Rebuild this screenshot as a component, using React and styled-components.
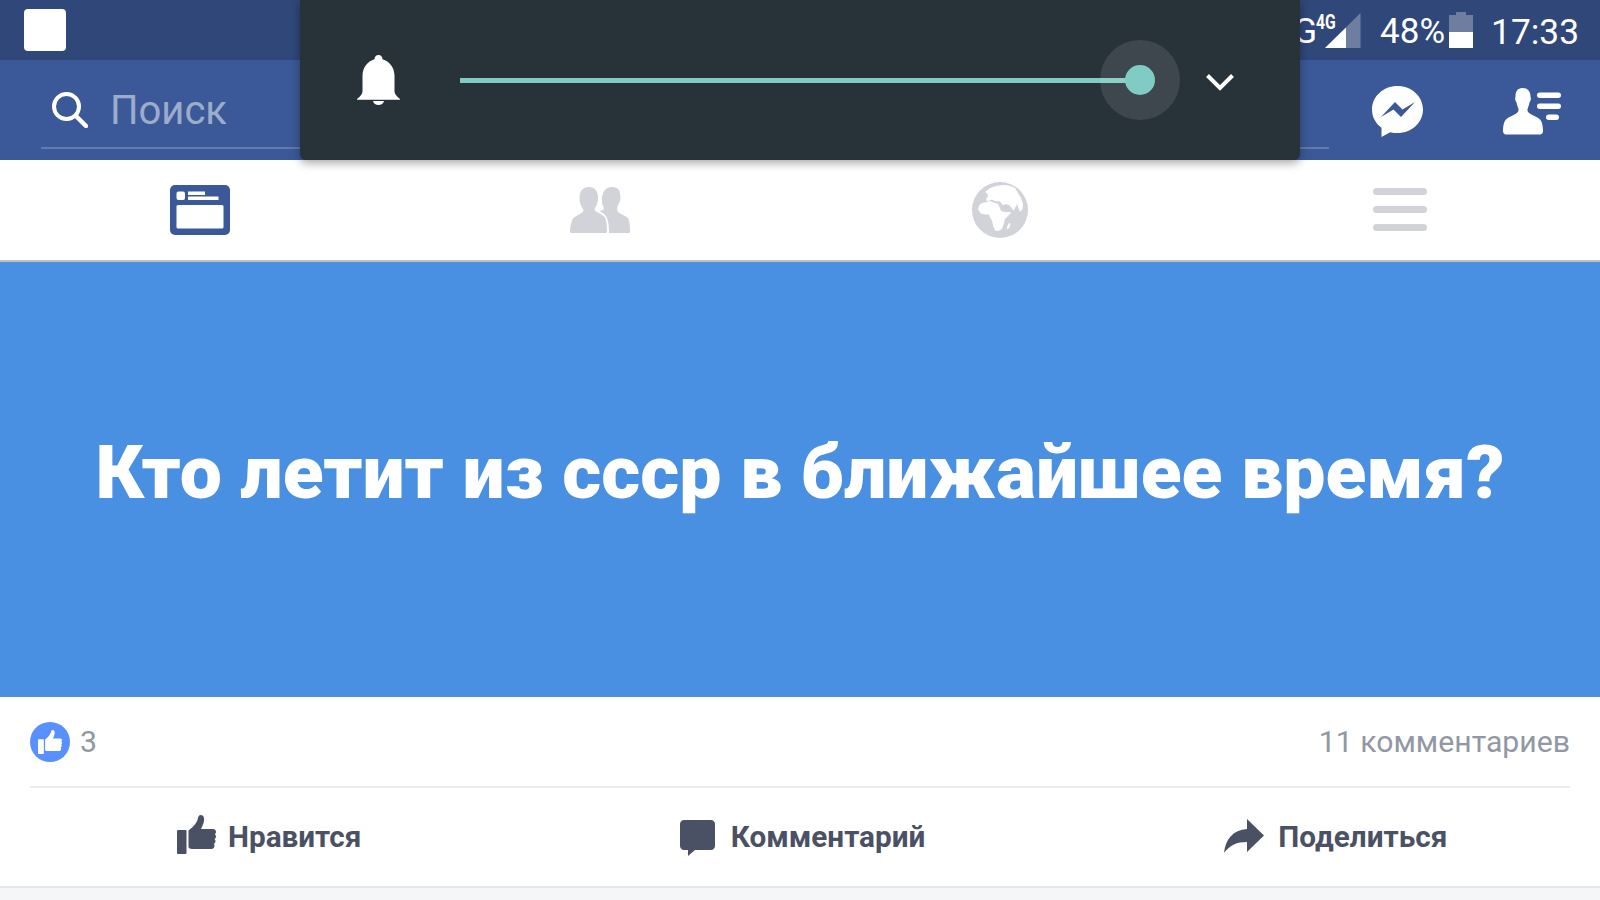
import React from 'react'
import styled, { createGlobalStyle } from 'styled-components'

const GlobalStyle = createGlobalStyle`
  html, body {
    margin: 0;
    padding: 0;
    background: #f5f6f8;
    font-family: Roboto, "Liberation Sans", sans-serif;
  }
`

const SearchIcon = () => (
  <svg width="36" height="36" viewBox="0 0 36 36" fill="none" stroke="#fff" strokeLinecap="round">
    <circle cx="14.500" cy="14.500" r="12.500" strokeWidth="4" />
    <path d="M24 24l10 10" strokeWidth="4.500" />
  </svg>
)

const BellIcon = () => (
  <svg width="43" height="50" viewBox="0 0 43 50" fill="#fff">
    <path d="M21.500 0c2.400 0 4 1.700 4 4.300C32.500 6.500 37.500 12.500 37.500 21v15.500c0 2.500 2.500 5 5.500 7.500v.8H0V44c3-2.500 5.500-5 5.500-7.500V21C5.500 12.500 10.500 6.500 17.500 4.300 17.500 1.700 19.100 0 21.500 0z" />
    <path d="M16 46h11c-.6 2.500-2.800 4-5.500 4S16.600 48.500 16 46z" />
  </svg>
)

const ChevronIcon = () => (
  <svg width="28" height="18" viewBox="0 0 28 18" fill="none" stroke="#fff" strokeWidth="4">
    <path d="M1.500 2.500L14 15 26.500 2.500" />
  </svg>
)

const MessengerIcon = () => (
  <svg width="51" height="51" viewBox="0 0 51 51">
    <path fill="#fff" d="M25.500 0C11.400 0 0 10.500 0 23.500c0 7.400 3.700 14 9.500 18.300V51l8.700-4.800c2.300.6 4.700.9 7.300.9 14.100 0 25.500-10.500 25.500-23.600C51 10.500 39.600 0 25.500 0z" />
    <path fill="#3b5998" d="M9 31l14-15 7.500 7.500L43 16 29 31l-7.500-7.500z" />
  </svg>
)

const FriendRequestIcon = () => (
  <svg width="58" height="47" viewBox="0 0 58 47" fill="#fff">
    <path d="M19.500 0c5 0 8 3.500 8 8.500 0 1 .5 1.500.3 3-.3 1.500-.8 2-1.300 3-.5 3-1.500 5-2 6.500-.3 2 .5 3.500 3 5 3 1.500 7 3 9.500 5.500 1.500 1.500 3 5 3 11.500 0 2-1.200 3.500-3 3.500H3c-1.800 0-3-1.500-3-3.500 0-6.500 1.500-10 3-11.500 2.500-2.500 6.500-4 9.500-5.500 2.500-1.500 3.300-3 3-5-.5-1.500-1.500-3.500-2-6.500-.5-1-1-1.500-1.300-3-.2-1.500.3-2 .3-3 0-5 2-8.500 7-8.500z" />
    <rect x="34" y="4.500" width="24" height="5.500" rx="2.750" />
    <rect x="34" y="15.500" width="24" height="5.500" rx="2.750" />
    <rect x="43" y="26.500" width="13" height="5.500" rx="2.750" />
  </svg>
)

const NewsIcon = () => (
  <svg width="60" height="50" viewBox="0 0 60 50">
    <rect width="60" height="50" rx="5" fill="#3b5998" />
    <rect x="6.500" y="6.500" width="8.500" height="8.500" rx="2" fill="#fff" />
    <rect x="18" y="6.500" width="17" height="3.500" fill="#fff" />
    <rect x="18" y="11.500" width="30.500" height="3.500" fill="#fff" />
    <rect x="6.500" y="20" width="47" height="23.500" rx="1.500" fill="#fff" />
  </svg>
)

const FriendsIcon = () => (
  <svg width="60" height="46" viewBox="0 0 60 46" fill="#d1d3d9">
    <path d="M19 0c6 0 9 4.500 9 10.500 0 4-1 7.500-3 10.500-.6 1-.6 2.200.4 3 2.200 2 8.600 3.500 10 7.500 1 2.600 1.600 7.500 1.600 13 0 .8-.6 1.500-1.500 1.500H1.500C.6 46 0 45.300 0 44.500c0-4.500 1-8.500 2.500-12 1.500-3.500 8-5 10.200-7.500 1-.8 1-2.200.3-3-2.500-3-3.500-7-3.500-11.500C9.500 4.500 13 0 19 0z" />
    <path d="M42 0c4.500 0 8 2.500 8 6.500 0 1.500.5 2.500.5 4 0 3-1.500 6-2.800 8.500-1 2.500-.7 5 1 6.500 2.500 2 8.500 3.500 10 7 1 3 1.300 7 1.300 12 0 1-.6 1.500-1.500 1.500H39c0-6-.5-11.500-2-15-1.500-3.500-4.500-5-7-6.500 1-1 2-1.700 3.500-1.500.5-1.500.5-3-.5-4.500-1.200-2-1.500-4-.8-5.500-.8-1.500-.5-3 .3-4.500C33.500 3 37 0 42 0z" />
  </svg>
)

const GlobeIcon = () => (
  <svg width="56" height="56" viewBox="0 0 56 56">
    <circle cx="28" cy="28" r="28" fill="#d1d3d9" />
    <path fill="#fff" d="M13 10l5-4 6-2 7-1 6 .5 6 2.500 3 5 3 5 2 6-.5 5-2.500 3-2-5-1-3-2 4-1.500 3-2.500-4-2-2-4-1-2 1.500-3-4-5-.5-3-1.500-5 2-1-3 2-2-1-3z" />
    <path fill="#fff" d="M10 21l5-1 3-1 4 1.500 4 1.500 2 4 1 3 4 1 5 0 1 1-3 3-3 3-1 4-2 6-4 2-3-.5-2-5-1-5-2-3-1-3-4 0-4-1-3-4 1-4z" />
    <path fill="#fff" d="M35 45l2-4 1.500.5-1 4-2.500 2z" />
  </svg>
)

const LikeIcon = ({ size = 39, color = '#4b5164' }) => (
  <svg width={size} height={size} viewBox="0 0 39 39" fill={color}>
    <rect x="0" y="15" width="9.500" height="24" rx="1" />
    <path d="M11.500 36V15.500C15 13 19 9 20.500 5c.6-1.700.6-5 3.300-5 3 0 3.700 3.500 3.200 6-.5 2.800-2 6-3 8h12c1.700 0 3 1.200 3 2.800 0 1-.5 1.900-1.200 2.400.8.500 1.200 1.300 1.200 2.300 0 1-.6 2-1.500 2.500.7.500 1 1.300 1 2.200 0 1.200-.7 2.200-1.700 2.600.4.500.7 1.200.7 1.900 0 1.700-1.300 3.300-3 3.300H15c-2 0-3.500-.700-3.500-2.500z" />
  </svg>
)

const CommentIcon = () => (
  <svg width="35" height="36" viewBox="0 0 35 36" fill="#4b5164">
    <path d="M4 0h27c2.200 0 4 1.800 4 4v22c0 2.200-1.800 4-4 4H15l-7 6v-6H4c-2.200 0-4-1.800-4-4V4c0-2.200 1.800-4 4-4z" />
  </svg>
)

const ShareIcon = () => (
  <svg width="40" height="34" viewBox="0 0 40 34" fill="#4b5164">
    <path d="M23 0l17 16.500L23 33V23c-10 0-17 3-23 11C1.500 20 9 11 23 10z" />
  </svg>
)

const SignalIcon = () => (
  <svg width="36" height="35" viewBox="0 0 36 35">
    <path fill="rgba(255,255,255,.3)" d="M35.500 0v35H0z" />
    <path fill="#fff" d="M21 14.500V35H0z" />
  </svg>
)

const BatteryIcon = () => (
  <svg width="24" height="36" viewBox="0 0 24 36">
    <path fill="rgba(255,255,255,.3)" d="M7 0h10v3h7v17H0V3h7z" />
    <rect y="20" width="24" height="16" fill="#fff" />
  </svg>
)

const App = () => (
  <>
    <GlobalStyle />
    <Page>
      <StatusBar>
        <AppBadge />
        <StatusRight>
          <NetworkLetter>G</NetworkLetter>
          <SignalBox>
            <SmallNetwork>4G</SmallNetwork>
            <SignalIcon />
          </SignalBox>
          <Percent>48%</Percent>
          <BatteryIcon />
          <Clock>17:33</Clock>
        </StatusRight>
      </StatusBar>

      <NavBar>
        <SearchBox>
          <SearchIcon />
          <SearchText>Поиск</SearchText>
        </SearchBox>
        <NavIcons>
          <MessengerIcon />
          <FriendRequestIcon />
        </NavIcons>
      </NavBar>

      <Tabs>
        <Tab><NewsIcon /></Tab>
        <Tab><FriendsIcon /></Tab>
        <Tab><GlobeIcon /></Tab>
        <Tab>
          <Burger>
            <BurgerLine />
            <BurgerLine />
            <BurgerLine />
          </Burger>
        </Tab>
      </Tabs>

      <Hero>
        <HeroTitle>Кто летит из ссср в ближайшее время?</HeroTitle>
      </Hero>

      <Stats>
        <StatsRow>
          <Likes>
            <LikeBadge><LikeIcon size={24} color="#fff" /></LikeBadge>
            <StatText>3</StatText>
          </Likes>
          <StatText>11 комментариев</StatText>
        </StatsRow>
      </Stats>

      <Actions>
        <Action $gap={12}>
          <ActionIcon $lift={3}><LikeIcon /></ActionIcon>
          <ActionLabel>Нравится</ActionLabel>
        </Action>
        <Action $gap={16}>
          <ActionIcon $lift={-3}><CommentIcon /></ActionIcon>
          <ActionLabel>Комментарий</ActionLabel>
        </Action>
        <Action $gap={14}>
          <ActionIcon $lift={0}><ShareIcon /></ActionIcon>
          <ActionLabel>Поделиться</ActionLabel>
        </Action>
      </Actions>

      <VolumePopup>
        <BellBox><BellIcon /></BellBox>
        <SliderTrack>
          <ThumbHalo />
          <Thumb />
        </SliderTrack>
        <ChevronBox><ChevronIcon /></ChevronBox>
      </VolumePopup>
    </Page>
  </>
)

const Page = styled.div`
  position: relative;
  width: 1600px;
  height: 900px;
  overflow: hidden;
  background: #f5f6f8;
`

const StatusBar = styled.div`
  height: 60px;
  box-sizing: border-box;
  padding: 0 21px 0 24px;
  display: flex;
  justify-content: space-between;
  align-items: center;
  background: #2f4779;
`

const AppBadge = styled.div`
  width: 42px;
  height: 42px;
  border-radius: 4px;
  background: #fff;
`

const StatusRight = styled.div`
  display: flex;
  align-items: center;
  color: #fff;
`

const NetworkLetter = styled.span`
  font-size: 35px;
  line-height: 60px;
  padding-top: 3px;
`

const SignalBox = styled.div`
  position: relative;
  width: 36px;
  height: 35px;
  margin: 0 19px 0 8px;
`

const SmallNetwork = styled.span`
  position: absolute;
  left: -9px;
  top: -1px;
  font-size: 21px;
  font-weight: 700;
  line-height: 20px;
  transform: scaleX(0.75);
  transform-origin: left center;
`

const Percent = styled.span`
  font-size: 35px;
  line-height: 60px;
  padding-top: 3px;
  margin-right: 4px;
`

const Clock = styled.span`
  font-size: 35.3px;
  line-height: 60px;
  padding-top: 3px;
  margin-left: 18px;
`

const NavBar = styled.div`
  height: 100px;
  box-sizing: border-box;
  padding: 0 39px 0 41px;
  display: flex;
  justify-content: space-between;
  background: #3b5998;
`

const SearchBox = styled.div`
  width: 1288px;
  height: 89px;
  box-sizing: border-box;
  padding: 13px 0 0 11px;
  display: flex;
  align-items: center;
  gap: 22px;
  border-bottom: 2px solid rgba(255, 255, 255, 0.2);
`

const SearchText = styled.span`
  font-size: 40px;
  color: rgba(255, 255, 255, 0.5);
`

const NavIcons = styled.div`
  display: flex;
  align-items: center;
  gap: 80px;
  margin-top: 2px;
`

const Tabs = styled.div`
  height: 100px;
  display: grid;
  grid-template-columns: repeat(4, 1fr);
  background: #fff;
`

const Tab = styled.div`
  display: flex;
  align-items: center;
  justify-content: center;
`

const Burger = styled.div`
  width: 54px;
  display: flex;
  flex-direction: column;
  gap: 11px;
  margin-top: -1px;
`

const BurgerLine = styled.div`
  height: 7px;
  border-radius: 4px;
  background: #d1d3d9;
`

const Hero = styled.div`
  height: 437px;
  box-sizing: border-box;
  padding-bottom: 16px;
  border-top: 2px solid #bcc0c6;
  display: flex;
  align-items: center;
  justify-content: center;
  background: #4a90e2;
`

const HeroTitle = styled.h1`
  margin: 0;
  font-size: 75px;
  font-weight: 900;
  color: #fff;
  white-space: nowrap;
`

const Stats = styled.div`
  height: 91px;
  box-sizing: border-box;
  padding: 0 30px;
  background: #fff;
`

const StatsRow = styled.div`
  height: 100%;
  display: flex;
  justify-content: space-between;
  align-items: center;
  border-bottom: 2px solid #ececee;
  box-sizing: border-box;
`

const Likes = styled.div`
  display: flex;
  align-items: center;
  gap: 10px;
`

const LikeBadge = styled.div`
  width: 40px;
  height: 40px;
  border-radius: 50%;
  display: flex;
  align-items: center;
  justify-content: center;
  background: #5890ff;
`

const StatText = styled.span`
  font-size: 30.2px;
  color: #9197a3;
`

const Actions = styled.div`
  height: 98px;
  display: grid;
  grid-template-columns: repeat(3, 1fr);
  border-bottom: 2px solid #e4e5e9;
  background: #fff;
`

const Action = styled.div`
  display: flex;
  align-items: center;
  justify-content: center;
  gap: ${(p) => p.$gap}px;
  padding: 0 0 2px 5px;
`

const ActionIcon = styled.span`
  display: flex;
  margin-bottom: ${(p) => p.$lift}px;
`

const ActionLabel = styled.span`
  font-size: 29.7px;
  font-weight: 700;
  color: #4b5164;
`

const VolumePopup = styled.div`
  position: absolute;
  left: 300px;
  top: 0;
  width: 1000px;
  height: 160px;
  box-sizing: border-box;
  padding: 0 66px 0 57px;
  display: flex;
  align-items: center;
  border-radius: 0 0 6px 6px;
  background: #283339;
  box-shadow: 0 3px 10px rgba(0, 0, 0, 0.35);
`

const BellBox = styled.div`
  display: flex;
  margin-right: 60px;
`

const SliderTrack = styled.div`
  position: relative;
  width: 680px;
  height: 5px;
  background: #80cbc4;
`

const ThumbHalo = styled.div`
  position: absolute;
  right: -40px;
  top: -37.5px;
  width: 80px;
  height: 80px;
  border-radius: 50%;
  background: rgba(255, 255, 255, 0.1);
`

const Thumb = styled.div`
  position: absolute;
  right: -15px;
  top: -12.5px;
  width: 30px;
  height: 30px;
  border-radius: 50%;
  background: #80cbc4;
`

const ChevronBox = styled.div`
  display: flex;
  margin: 4px 0 0 66px;
`

export default App
